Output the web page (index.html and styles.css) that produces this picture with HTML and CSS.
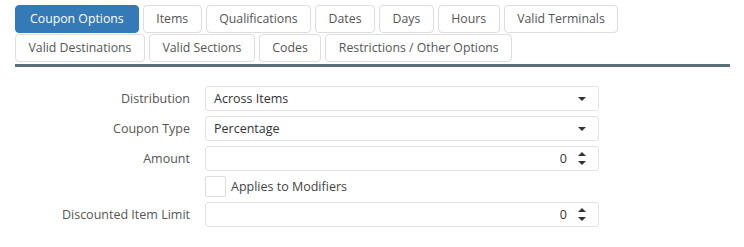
FILE: index.html
```html
<!DOCTYPE html>
<html lang="en">
<head>
  <meta charset="UTF-8" />
  <title>Coupon Options</title>
  <link rel="stylesheet" href="styles.css">
</head>
<body>

  <div class="tabs">
    <a class="tab active">Coupon Options</a>
    <a class="tab">Items</a>
    <a class="tab">Qualifications</a>
    <a class="tab">Dates</a>
    <a class="tab">Days</a>
    <a class="tab">Hours</a>
    <a class="tab">Valid Terminals</a>
    <a class="tab">Valid Destinations</a>
    <a class="tab">Valid Sections</a>
    <a class="tab">Codes</a>
    <a class="tab">Restrictions / Other Options</a>
  </div>

  <form class="options">
    <div class="row">
      <label>Distribution</label>
      <div class="field select">
        <span>Across Items</span>
        <span class="caret"></span>
      </div>
    </div>

    <div class="row">
      <label>Coupon Type</label>
      <div class="field select">
        <span>Percentage</span>
        <span class="caret"></span>
      </div>
    </div>

    <div class="row">
      <label>Amount</label>
      <div class="field number">
        <span class="value">0</span>
        <span class="spin"><i class="up"></i><i class="down"></i></span>
      </div>
    </div>

    <div class="row">
      <label></label>
      <div class="check">
        <span class="box"></span>
        <span>Applies to Modifiers</span>
      </div>
    </div>

    <div class="row">
      <label>Discounted Item Limit</label>
      <div class="field number">
        <span class="value">0</span>
        <span class="spin"><i class="up"></i><i class="down"></i></span>
      </div>
    </div>
  </form>

</body>
</html>
```

FILE: styles.css
```css
body {
  margin: 0;
  font-family: 'Open Sans', sans-serif;
  font-size: 12.5px;
  color: #333;
  background: #fff;
}

.tabs {
  display: flex;
  flex-wrap: wrap;
  gap: 1px 4px;
  width: 620px;
  margin: 5px 0 0 15px;
}

.tab {
  display: block;
  height: 26px;
  line-height: 26px;
  padding: 0 12.5px;
  border: 1px solid #ddd;
  border-radius: 4px;
  font-size: 12.3px;
  color: #555;
}

.tab.active {
  background-color: #337ab7;
  border-color: #337ab7;
  color: #fff;
  padding: 0 14px;
}

.options {
  margin: 2px 14px 0 15px;
  padding-top: 19px;
  border-top: 3px solid #5b6f7b;
}

.row {
  display: flex;
  align-items: center;
  margin-bottom: 5px;
}

.row label {
  width: 175px;
  text-align: right;
  padding-right: 15px;
  color: #555;
}

.field {
  width: 392px;
  height: 23px;
  border: 1px solid #e2e2e2;
  border-radius: 3px;
  display: flex;
  align-items: center;
}

.select {
  justify-content: space-between;
  padding-left: 8px;
  width: 384px;
}

.caret {
  width: 0;
  height: 0;
  border-left: 4px solid transparent;
  border-right: 4px solid transparent;
  border-top: 4px solid #333;
  margin-right: 12px;
}

.number {
  justify-content: flex-end;
}

.value {
  margin-right: 11px;
}

.spin {
  display: flex;
  flex-direction: column;
  gap: 5px;
  margin-right: 12px;
}

.spin i {
  width: 0;
  height: 0;
  border-left: 4px solid transparent;
  border-right: 4px solid transparent;
}

.spin .up {
  border-bottom: 4px solid #333;
}

.spin .down {
  border-top: 4px solid #333;
}

.check {
  display: flex;
  align-items: center;
  gap: 5px;
  color: #444;
}

.box {
  width: 19px;
  height: 19px;
  border: 1px solid #ddd;
  border-radius: 2px;
}
```
